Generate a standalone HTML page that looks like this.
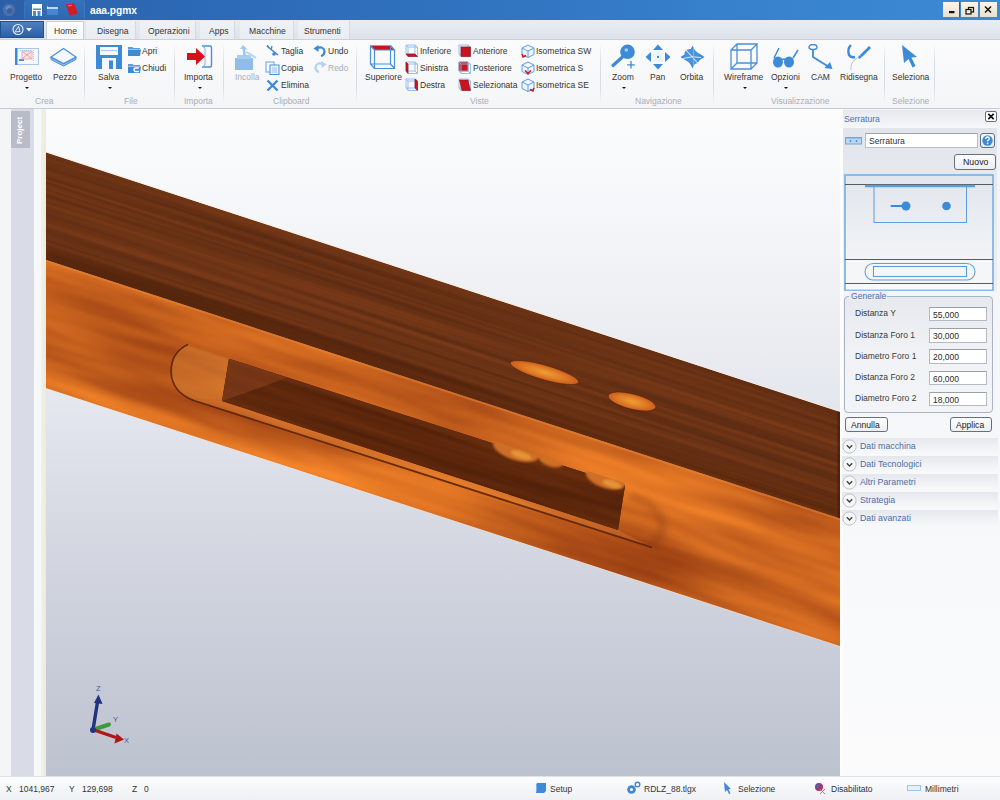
<!DOCTYPE html>
<html><head><meta charset="utf-8">
<style>
*{margin:0;padding:0;box-sizing:border-box}
html,body{width:1000px;height:800px;overflow:hidden;background:#f3f4f7;font-family:"Liberation Sans",sans-serif;color:#333}
.a{position:absolute}
.t{position:absolute;font-size:8.5px;line-height:10px;white-space:nowrap;color:#333}
.g{color:#a9aeb6}
.sep{position:absolute;top:45px;width:1px;height:60px;background:linear-gradient(#f6f7f9,#d9dde3 30%,#d9dde3 70%,#f6f7f9)}
.arr{position:absolute;width:0;height:0;border-left:2.5px solid transparent;border-right:2.5px solid transparent;border-top:2.5px solid #111;margin-left:1px}
</style></head><body>

<!-- TITLE BAR -->
<div class="a" style="left:0;top:0;width:1000px;height:20px;background:linear-gradient(90deg,#2b5fa8 0%,#2d66b0 9%,#2c69b6 20%,#3174c0 50%,#3882cd 75%,#3c89d4 100%)"></div>
<div class="a" id="titletext" style="left:90px;top:3.5px;font-size:10.2px;line-height:14px;color:#fff;font-weight:bold">aaa.pgmx</div>


<!-- title icons -->
<svg class="a" style="left:0;top:0" width="90" height="20" viewBox="0 0 90 20">
 <defs><linearGradient id="qa" x1="0" y1="0" x2="0" y2="1"><stop offset="0" stop-color="#3a7cc8"/><stop offset="1" stop-color="#2f6ab4"/></linearGradient></defs>
 <rect x="25" y="0" width="59" height="19.5" fill="url(#qa)" opacity="0.6"/>
 <circle cx="9" cy="10" r="6.2" fill="#4a6fab"/>
 <path d="M5 8 Q9 3 13 8 Q10 6 7 10 Z" fill="#6d8cc0"/>
 <circle cx="9.5" cy="11" r="2.5" fill="#3c5f9c"/>
 <path d="M24.5 1 V19" stroke="#5c8fd0" stroke-width="0.8" opacity="0.5"/>
 <rect x="32" y="4" width="10" height="12" fill="#fff"/>
 <rect x="33" y="8.5" width="8" height="1.5" fill="#4a8ad0"/>
 <rect x="33" y="11" width="3" height="5" fill="#4a8ad0"/>
 <rect x="37.5" y="11" width="3" height="5" fill="#4a8ad0"/>
 <rect x="47" y="7" width="11" height="8" fill="#4d96dc" opacity="0.7"/>
 <path d="M47.5 8 H58" stroke="#e6f2fc" stroke-width="1.5"/>
 <path d="M47.5 6.5 V9" stroke="#e6f2fc" stroke-width="1.2"/>
 <path d="M66 4.5 L74 3 L78 13.5 L69.5 15.5 Z" fill="#d41c26"/>
 <path d="M68 6 L72 5.2" stroke="#f0a0a0" stroke-width="0.7"/>
 <path d="M84.5 1 V19" stroke="#5c8fd0" stroke-width="0.8" opacity="0.5"/>
</svg>
<div class="a" style="left:943px;top:2px;width:17px;height:15px;background:linear-gradient(#fbf6ea,#e9e1cf);border-right:1px solid #2a5d9f"></div>
<div class="a" style="left:961px;top:2px;width:17px;height:15px;background:linear-gradient(#fbf6ea,#e9e1cf)"></div>
<div class="a" style="left:980px;top:2px;width:17px;height:15px;background:linear-gradient(#fbf6ea,#e9e1cf)"></div>
<svg class="a" style="left:943px;top:2px" width="54" height="15" viewBox="0 0 54 15">
 <rect x="6" y="9" width="5.5" height="2.2" fill="#111"/>
 <rect x="25.5" y="5.5" width="5" height="4.5" fill="none" stroke="#111" stroke-width="1.2"/>
 <rect x="23" y="7.5" width="5" height="4.5" fill="#f4eedf" stroke="#111" stroke-width="1.2"/>
 <path d="M42 4.5 L48 10.5 M48 4.5 L42 10.5" stroke="#111" stroke-width="1.5"/>
</svg>


<!-- TAB ROW -->
<div class="a" style="left:0;top:20px;width:1000px;height:19px;background:linear-gradient(#e9edf3,#dde2ea)"></div>
<div class="a" style="left:0;top:21px;width:44px;height:17px;background:linear-gradient(#4f7fbf,#2d5fa6);border:1px solid #24508f"></div>
<div class="a" style="left:85px;top:21px;width:51px;height:18px;background:linear-gradient(#eef1f5,#e9ecf1);border-left:1px solid #e4e8ed;border-right:1px solid #d5dae2"></div>
<div class="a" style="left:139px;top:21px;width:57px;height:18px;background:linear-gradient(#eef1f5,#e9ecf1);border-left:1px solid #e4e8ed;border-right:1px solid #d5dae2"></div>
<div class="a" style="left:199px;top:21px;width:36px;height:18px;background:linear-gradient(#eef1f5,#e9ecf1);border-left:1px solid #e4e8ed;border-right:1px solid #d5dae2"></div>
<div class="a" style="left:239px;top:21px;width:55px;height:18px;background:linear-gradient(#eef1f5,#e9ecf1);border-left:1px solid #e4e8ed;border-right:1px solid #d5dae2"></div>
<div class="a" style="left:297px;top:21px;width:53px;height:18px;background:linear-gradient(#eef1f5,#e9ecf1);border-left:1px solid #e4e8ed;border-right:1px solid #d5dae2"></div>
<div class="a" style="left:46px;top:21px;width:38px;height:19px;background:linear-gradient(#fdfdfe,#f6f7f9);border:1px solid #c9d0da;border-bottom:none"></div>
<svg class="a" style="left:4px;top:22px" width="38" height="15" viewBox="0 0 38 15">
 <circle cx="14" cy="7.5" r="5" fill="none" stroke="#e8f0fa" stroke-width="1.1"/>
 <path d="M11 10 L14.5 4.5 L16 9.5 Z" fill="none" stroke="#e8f0fa" stroke-width="1"/>
 <path d="M22 6 L28 6 L25 9.5 Z" fill="#e8f0fa"/>
</svg>
<div class="t" style="left:54px;top:26px;font-size:8.6px;color:#333">Home</div>
<div class="t" style="left:97px;top:26px;font-size:8.6px">Disegna</div>
<div class="t" style="left:148px;top:26px;font-size:8.6px">Operazioni</div>
<div class="t" style="left:209px;top:26px;font-size:8.6px">Apps</div>
<div class="t" style="left:249px;top:26px;font-size:8.6px">Macchine</div>
<div class="t" style="left:304px;top:26px;font-size:8.6px">Strumenti</div>

<!-- RIBBON -->
<div class="a" style="left:0;top:39px;width:1000px;height:70px;background:linear-gradient(#fbfbfc,#f4f5f7);border-top:1px solid #c9d0da;border-bottom:1px solid #c6ccd6"></div>


<!-- RIBBON CONTENT -->
<div class="sep" style="left:84px"></div>
<div class="sep" style="left:174px"></div>
<div class="sep" style="left:223px"></div>
<div class="sep" style="left:356px"></div>
<div class="sep" style="left:600px"></div>
<div class="sep" style="left:713px"></div>
<div class="sep" style="left:884px"></div>
<div class="sep" style="left:934px"></div>

<!-- Crea -->
<svg class="a" style="left:14px;top:47px" width="26" height="19" viewBox="0 0 26 19">
 <rect x="1.5" y="1.5" width="23" height="16" fill="#f4f7fb" stroke="#a9c6e6" stroke-width="1"/>
 <rect x="1" y="1" width="2.5" height="17" fill="#3d8ad4"/>
 <rect x="5" y="12" width="5" height="2" fill="#4a90d8"/>
 <rect x="8" y="4" width="10" height="8" fill="#f7e3e6" stroke="#e0a0a8" stroke-width="0.8"/>
 <path d="M9 5 L17 11 M17 5 L9 11" stroke="#e89098" stroke-width="0.8"/>
 <path d="M19.5 3 V14 M6 3.5 H18" stroke="#9bb8d8" stroke-width="0.7" stroke-dasharray="1 1"/>
</svg>
<div class="t" style="left:10px;top:72px">Progetto</div>
<div class="arr" style="left:24px;top:87px"></div>
<svg class="a" style="left:50px;top:47px" width="27" height="20" viewBox="0 0 27 20">
 <path d="M1 10 V12.5 L13.5 19 L26 12.5 V10 L13.5 16.5 Z" fill="#8cbbe8" stroke="#4a90d8" stroke-width="1"/>
 <path d="M1 10 L13.5 1.5 L26 10 L13.5 16.5 Z" fill="#f3f8fd" stroke="#4a90d8" stroke-width="1.3"/>
</svg>
<div class="t" style="left:53px;top:72px">Pezzo</div>
<div class="t g" style="left:35px;top:96px">Crea</div>

<!-- File -->
<svg class="a" style="left:96px;top:45px" width="26" height="24" viewBox="0 0 26 24">
 <path d="M0 0 H26 V24 H0 Z" fill="#3d8ad6"/>
 <rect x="4" y="2" width="18" height="8" fill="#f4f8fc"/>
 <rect x="5" y="5" width="16" height="1" fill="#a9c9ea"/>
 <rect x="6" y="13" width="14" height="11" fill="#f4f8fc"/>
 <rect x="13" y="15.5" width="4" height="8.5" fill="#3d8ad6"/>
</svg>
<div class="t" style="left:98px;top:72px">Salva</div>
<div class="arr" style="left:107px;top:87px"></div>
<svg class="a" style="left:128px;top:46px" width="13" height="10" viewBox="0 0 13 10">
 <path d="M0 1 H4.5 L5.5 2 H12 V3 H0 Z" fill="#5a9ee0"/>
 <path d="M0 3.5 H13 L12 10 H0 Z" fill="#3d8ad6"/>
</svg>
<div class="t" style="left:142px;top:46px">Apri</div>
<svg class="a" style="left:128px;top:63px" width="13" height="10" viewBox="0 0 13 10">
 <path d="M0 1 H4.5 L5.5 2 H12 V3 H0 Z" fill="#5a9ee0"/>
 <path d="M0 3.5 H13 L12 10 H0 Z" fill="#3d8ad6"/>
 <path d="M11 5 H7.5 Q6 5 6 6.7 Q6 8.4 7.5 8.4 H11" stroke="#fff" stroke-width="1.5" fill="none"/>
</svg>
<div class="t" style="left:142px;top:63px">Chiudi</div>
<div class="t g" style="left:124px;top:96px">File</div>

<!-- Importa -->
<svg class="a" style="left:186px;top:44px" width="27" height="25" viewBox="0 0 27 25">
 <path d="M16 2 H24 Q25.5 2 25.5 3.5 V21.5 Q25.5 23 24 23 H16" fill="none" stroke="#4a90d8" stroke-width="1.4"/>
 <path d="M16 2 L19 4 V21 L16 23" fill="none" stroke="#7fb2e6" stroke-width="1"/>
 <path d="M1 9 H10 V4 L19 12.5 L10 21 V16 H1 Z" fill="#d4101c"/>
</svg>
<div class="t" style="left:184px;top:72px">Importa</div>
<div class="arr" style="left:197px;top:87px"></div>
<div class="t g" style="left:184px;top:96px">Importa</div>

<!-- Clipboard -->
<svg class="a" style="left:234px;top:44px" width="25" height="27" viewBox="0 0 25 27">
 <rect x="1" y="14" width="18" height="12" fill="#8fbde8"/>
 <rect x="3" y="11" width="14" height="4" fill="#a8cdee"/>
 <path d="M9 1 L6 5 L8.5 5 L9.5 12 L12 12 L11 5 L14 6 Z" fill="#9cc6ec"/>
 <path d="M12 8 Q17 10 22 14" stroke="#b8d6f2" stroke-width="2" fill="none"/>
</svg>
<div class="t g" style="left:235px;top:72px">Incolla</div>
<svg class="a" style="left:266px;top:45px" width="14" height="11" viewBox="0 0 14 11">
 <path d="M1 1 L7 6 L12 10" stroke="#3d8ad6" stroke-width="1.6" fill="none"/>
 <path d="M6 1 L5 5 M3 3 Q1 1 2 0" stroke="#3d8ad6" stroke-width="1.3" fill="none"/>
 <circle cx="8" cy="9" r="1.8" fill="#3d8ad6"/>
</svg>
<div class="t" style="left:281px;top:46px">Taglia</div>
<svg class="a" style="left:265px;top:61px" width="15" height="14" viewBox="0 0 15 14">
 <rect x="1" y="1" width="8" height="10" fill="#f4f8fc" stroke="#6aa6e0" stroke-width="1"/>
 <rect x="5" y="4" width="9" height="9.5" fill="#e8f1fa" stroke="#4a90d8" stroke-width="1"/>
 <path d="M7 7 H12 M7 9 H12 M7 11 H12" stroke="#8ab8e6" stroke-width="0.8"/>
</svg>
<div class="t" style="left:281px;top:63px">Copia</div>
<svg class="a" style="left:266px;top:79px" width="13" height="13" viewBox="0 0 13 13">
 <path d="M1.5 1.5 L11.5 11.5 M11.5 1.5 L1.5 11.5" stroke="#3d8ad6" stroke-width="2.4"/>
</svg>
<div class="t" style="left:281px;top:80px">Elimina</div>
<svg class="a" style="left:313px;top:45px" width="14" height="12" viewBox="0 0 14 12">
 <path d="M4 3 Q11 1 11.5 6.5 Q11.5 10 8 11" stroke="#3d8ad6" stroke-width="2.2" fill="none"/>
 <path d="M0.5 3.5 L5.5 0 L5.5 7 Z" fill="#3d8ad6"/>
</svg>
<div class="t" style="left:328px;top:46px">Undo</div>
<svg class="a" style="left:313px;top:61px" width="14" height="12" viewBox="0 0 14 12">
 <path d="M10 3 Q3 1 2.5 6.5 Q2.5 10 6 11" stroke="#b2d2f0" stroke-width="2.2" fill="none"/>
 <path d="M13.5 3.5 L8.5 0 L8.5 7 Z" fill="#b2d2f0"/>
</svg>
<div class="t g" style="left:328px;top:63px">Redo</div>
<div class="t g" style="left:273px;top:96px">Clipboard</div>

<!-- Viste -->
<svg class="a" style="left:369px;top:44px" width="28" height="26" viewBox="0 0 28 26">
 <path d="M1.5 1.5 H21.5 L25.5 6 H5.5 Z" fill="#c8141e"/>
 <path d="M1.5 1.5 V20 H21.5 V1.5 M5.5 6 H25.5 V24.5 H5.5 Z M1.5 20 L5.5 24.5 M21.5 20 L25.5 24.5 M1.5 1.5 L5.5 6 M21.5 1.5 L25.5 6" fill="none" stroke="#4a90d8" stroke-width="1.2"/>
</svg>
<div class="t" style="left:365px;top:72px">Superiore</div>
<svg class="a" style="left:405px;top:44px" width="14" height="14" viewBox="0 0 14 14"><path d="M1 1 H10 V10 H1 Z M3 3 H12.5 V12.5 H3 Z M1 1 L3 3 M10 1 L12.5 3 M1 10 L3 12.5 M10 10 L12.5 12.5" fill="none" stroke="#8ab8e6" stroke-width="0.9"/><path d="M1 10 H10 L12.5 12.5 H3 Z" fill="#c8141e" stroke="#a80e16" stroke-width="0.6"/></svg><div class="t" style="left:420px;top:46px">Inferiore</div>
<svg class="a" style="left:405px;top:61px" width="14" height="14" viewBox="0 0 14 14"><path d="M1 1 H10 V10 H1 Z M3 3 H12.5 V12.5 H3 Z M1 1 L3 3 M10 1 L12.5 3 M1 10 L3 12.5 M10 10 L12.5 12.5" fill="none" stroke="#8ab8e6" stroke-width="0.9"/><path d="M1 1 L3 3 V12.5 L1 10 Z" fill="#c8141e" stroke="#a80e16" stroke-width="0.6"/></svg><div class="t" style="left:420px;top:63px">Sinistra</div>
<svg class="a" style="left:405px;top:78px" width="14" height="14" viewBox="0 0 14 14"><path d="M1 1 H10 V10 H1 Z M3 3 H12.5 V12.5 H3 Z M1 1 L3 3 M10 1 L12.5 3 M1 10 L3 12.5 M10 10 L12.5 12.5" fill="none" stroke="#8ab8e6" stroke-width="0.9"/><path d="M10 1 L12.5 3 V12.5 L10 10 Z" fill="#c8141e" stroke="#a80e16" stroke-width="0.6"/></svg><div class="t" style="left:420px;top:80px">Destra</div>
<svg class="a" style="left:458px;top:44px" width="14" height="14" viewBox="0 0 14 14"><path d="M1 1 H10 V10 H1 Z M3 3 H12.5 V12.5 H3 Z M1 1 L3 3 M10 1 L12.5 3 M1 10 L3 12.5 M10 10 L12.5 12.5" fill="none" stroke="#8ab8e6" stroke-width="0.9"/><path d="M3 3 H12.5 V12.5 H3 Z" fill="#c8141e" stroke="#a80e16" stroke-width="0.6"/></svg><div class="t" style="left:473px;top:46px">Anteriore</div>
<svg class="a" style="left:458px;top:61px" width="14" height="14" viewBox="0 0 14 14"><path d="M1 1 H10 V10 H1 Z" fill="#c8141e" stroke="#a80e16" stroke-width="0.6"/><path d="M1 1 H10 V10 H1 Z M3 3 H12.5 V12.5 H3 Z M1 1 L3 3 M10 1 L12.5 3 M1 10 L3 12.5 M10 10 L12.5 12.5" fill="none" stroke="#8ab8e6" stroke-width="0.9"/></svg><div class="t" style="left:473px;top:63px">Posteriore</div>
<svg class="a" style="left:458px;top:78px" width="14" height="14" viewBox="0 0 14 14"><path d="M1 1 H10 V10 H1 Z M3 3 H12.5 V12.5 H3 Z M1 1 L3 3 M10 1 L12.5 3 M1 10 L3 12.5 M10 10 L12.5 12.5" fill="none" stroke="#8ab8e6" stroke-width="0.9"/><path d="M1.5 2 H10 L12.5 12.5 H4 Z" fill="#c8141e" stroke="#a80e16" stroke-width="0.6"/></svg><div class="t" style="left:473px;top:80px">Selezionata</div>
<svg class="a" style="left:521px;top:44px" width="14" height="14" viewBox="0 0 14 14">
 <path d="M7 1 L13 4 V10.5 L7 13.5 L1 10.5 V4 Z M1 4 L7 7 L13 4 M7 7 V13.5" fill="#eef5fc" stroke="#5a9ee0" stroke-width="1"/>
 <path d="M1 10 L2 13 L5 11.5" fill="none" stroke="#c8141e" stroke-width="1.4"/>
</svg><div class="t" style="left:536px;top:46px">Isometrica SW</div>
<svg class="a" style="left:521px;top:61px" width="14" height="14" viewBox="0 0 14 14">
 <path d="M7 1 L13 4 V10.5 L7 13.5 L1 10.5 V4 Z M1 4 L7 7 L13 4 M7 7 V13.5" fill="#eef5fc" stroke="#5a9ee0" stroke-width="1"/>
 <path d="M4 9.5 L7 12.5 L10 9.5" fill="none" stroke="#c8141e" stroke-width="1.4"/>
</svg><div class="t" style="left:536px;top:63px">Isometrica S</div>
<svg class="a" style="left:521px;top:78px" width="14" height="14" viewBox="0 0 14 14">
 <path d="M7 1 L13 4 V10.5 L7 13.5 L1 10.5 V4 Z M1 4 L7 7 L13 4 M7 7 V13.5" fill="#eef5fc" stroke="#5a9ee0" stroke-width="1"/>
 <path d="M13 10 L12 13 L9 11.5" fill="none" stroke="#c8141e" stroke-width="1.4"/>
</svg><div class="t" style="left:536px;top:80px">Isometrica SE</div>
<div class="t g" style="left:470px;top:96px">Viste</div>

<!-- Navigazione -->
<svg class="a" style="left:610px;top:44px" width="27" height="26" viewBox="0 0 27 26">
 <circle cx="17.5" cy="7.8" r="7.3" fill="#3d8ad6"/>
 <circle cx="16.3" cy="6" r="1.8" fill="#a9d0f2"/>
 <path d="M12.5 13 L3 21.5" stroke="#3d8ad6" stroke-width="3.2" stroke-linecap="round"/>
 <path d="M21 17 V24.5 M17.2 20.8 H24.8" stroke="#3d8ad6" stroke-width="1.3"/>
</svg>
<div class="t" style="left:612px;top:72px">Zoom</div>
<div class="arr" style="left:621px;top:87px"></div>
<svg class="a" style="left:645px;top:44px" width="26" height="26" viewBox="0 0 26 26">
 <path d="M13 0.5 L18 6 H8 Z M13 25.5 L18 20 H8 Z M0.5 13 L6 8 V18 Z M25.5 13 L20 8 V18 Z" fill="#3d8ad6"/>
 <rect x="12" y="12" width="2" height="2" fill="#3d8ad6"/>
 <path d="M8 8 H18 V18 H8 Z" fill="#e6f0fa" opacity="0.6"/>
 <rect x="12" y="12" width="2" height="2" fill="#3d8ad6"/>
</svg>
<div class="t" style="left:650px;top:72px">Pan</div>
<svg class="a" style="left:679px;top:44px" width="27" height="26" viewBox="0 0 27 26">
 <path d="M13.5 1.5 Q15.5 7 19 9 Q23 11 25.5 13 Q22 15 19 17 Q15.5 19 13.5 24.5 Q11.5 19 8 17 Q4 15 1.5 13 Q5 11 8 9 Q11.5 7 13.5 1.5 Z" fill="#3d8ad6"/>
 <ellipse cx="13" cy="12.5" rx="8.5" ry="6.5" fill="#4a92da" transform="rotate(40 13 12.5)"/>
 <path d="M6 5 L20 20.5" stroke="#d8eafa" stroke-width="1.1"/>
 <path d="M4 14.5 Q13 11.5 22 13.5" stroke="#d8eafa" stroke-width="1" fill="none"/>
 <path d="M14.5 3 V22" stroke="#8cc0ee" stroke-width="0.8"/>
</svg>
<div class="t" style="left:680px;top:72px">Orbita</div>
<div class="t g" style="left:635px;top:96px">Navigazione</div>

<!-- Visualizzazione -->
<svg class="a" style="left:730px;top:43px" width="28" height="27" viewBox="0 0 28 27">
 <path d="M1 7 H21 V26 H1 Z M1 7 L7 1 H27 L21 7 M27 1 V20 L21 26 M7 1 V20 H27 M1 26 L7 20" fill="none" stroke="#4a90d8" stroke-width="1.3"/>
</svg>
<div class="t" style="left:724px;top:72px">Wireframe</div>
<div class="arr" style="left:742px;top:87px"></div>
<svg class="a" style="left:771px;top:45px" width="28" height="24" viewBox="0 0 28 24">
 <ellipse cx="7" cy="17" rx="5" ry="5.5" fill="#3d8ad6"/>
 <ellipse cx="18" cy="17" rx="5" ry="5.5" fill="#3d8ad6"/>
 <path d="M11.5 15 Q12.5 13 14 15" stroke="#3d8ad6" stroke-width="1.5" fill="none"/>
 <path d="M3 13 L8 3 M22 13 L27 5" stroke="#3d8ad6" stroke-width="1.5" fill="none"/>
</svg>
<div class="t" style="left:771px;top:72px">Opzioni</div>
<div class="arr" style="left:783px;top:87px"></div>
<svg class="a" style="left:808px;top:44px" width="26" height="26" viewBox="0 0 26 26">
 <ellipse cx="5" cy="3" rx="4" ry="2.5" fill="none" stroke="#3d8ad6" stroke-width="1.4"/>
 <path d="M5 5.5 V13 L21 23" stroke="#3d8ad6" stroke-width="1.8" fill="none"/>
 <path d="M24.5 25 L16.5 24 L22 18 Z" fill="#3d8ad6"/>
</svg>
<div class="t" style="left:811px;top:72px">CAM</div>
<svg class="a" style="left:845px;top:43px" width="27" height="28" viewBox="0 0 27 28">
 <path d="M15 12 L24 3 L26 5 L17 14 Z" fill="#3d8ad6"/>
 <path d="M17 7 L22 5" stroke="#e6f0fa" stroke-width="0.8"/>
 <path d="M13 14 L15 12 L17 14 L14 16 Z" fill="#3d8ad6"/>
 <path d="M6 2 Q2 6 4 12 Q6 15 10 14" stroke="#3d8ad6" stroke-width="2.4" fill="none"/>
 <path d="M12 15 Q5 19 6 27" stroke="#a9c9ea" stroke-width="1" fill="none"/>
</svg>
<div class="t" style="left:840px;top:72px">Ridisegna</div>
<div class="t g" style="left:771px;top:96px">Visualizzazione</div>

<!-- Selezione -->
<svg class="a" style="left:901px;top:44px" width="18" height="26" viewBox="0 0 18 26">
 <path d="M1 1 L16 13 L10.5 13.5 L14.5 22 L11.5 23.5 L7.5 15 L3 19 Z" fill="#3d8ad6"/>
</svg>
<div class="t" style="left:892px;top:72px">Seleziona</div>
<div class="t g" style="left:892px;top:96px">Selezione</div>

<!-- LEFT SIDEBAR -->
<div class="a" style="left:0;top:109px;width:11px;height:667px;background:#f4f5f8"></div>
<div class="a" style="left:11px;top:109px;width:23px;height:667px;background:#d9dce6"></div>
<div class="a" style="left:34px;top:109px;width:7px;height:667px;background:#f7f8fa"></div>
<div class="a" style="left:41px;top:109px;width:5px;height:667px;background:linear-gradient(90deg,#f1f1e6,#ecebdc)"></div>

<div class="a" style="left:11px;top:111px;width:19px;height:37px;background:#b8bcc8;border-radius:1px"></div>
<div class="a" style="left:14px;top:144px;font-size:8px;line-height:12px;color:#fff;font-weight:bold;transform:rotate(-90deg);transform-origin:0 0;white-space:nowrap">Project</div>

<!-- VIEWPORT -->
<div class="a" style="left:46px;top:109px;width:794px;height:667px;background:linear-gradient(#fcfcfd 0%,#f7f8fa 12%,#eff0f4 28%,#e4e7ee 44%,#d8dbe4 60%,#caceda 80%,#bdc2cf 100%)"></div>


<!-- WOOD -->
<svg class="a" style="left:46px;top:109px" width="794" height="667" viewBox="46 109 794 667">
<defs>
 <filter id="ftop" x="0" y="0" width="100%" height="100%" color-interpolation-filters="sRGB">
  <feTurbulence type="fractalNoise" baseFrequency="0.0018 0.22" numOctaves="3" seed="5"/>
  <feColorMatrix type="matrix" values="0.2 0 0 0 0.315  0.1 0 0 0 0.146  0.04 0 0 0 0.062  0 0 0 0 1"/>
 </filter>
 <filter id="ffront" x="0" y="0" width="100%" height="100%" color-interpolation-filters="sRGB">
  <feTurbulence type="fractalNoise" baseFrequency="0.004 0.032" numOctaves="3" seed="12"/>
  <feColorMatrix type="matrix" values="0.5 0 0 0 0.54  0.38 0 0 0 0.2  0.12 0 0 0 0.06  0 0 0 0 1"/>
 </filter>
 <filter id="fpocket" x="0" y="0" width="100%" height="100%" color-interpolation-filters="sRGB">
  <feTurbulence type="fractalNoise" baseFrequency="0.005 0.12" numOctaves="2" seed="11"/>
  <feColorMatrix type="matrix" values="0.18 0 0 0 0.27  0.09 0 0 0 0.105  0.04 0 0 0 0.025  0 0 0 0 1"/>
 </filter>
 <clipPath id="ctop"><polygon points="46,152.5 840,412 840,518.5 46,260"/></clipPath>
 <clipPath id="cfront"><polygon points="46,260 840,518.5 840,646 46,388"/></clipPath>
 <clipPath id="cpocket"><polygon points="229,358.7 625,485.5 618,530 222,401"/></clipPath>
 <clipPath id="cpocket2"><polygon points="229,356.5 625,483 618,530 222,401"/></clipPath>
 <radialGradient id="hole" cx="0.5" cy="0.5" r="0.55">
  <stop offset="0" stop-color="#eba032"/><stop offset="0.55" stop-color="#e07a26"/><stop offset="0.9" stop-color="#c85e1c"/><stop offset="1" stop-color="#8a3a10"/>
 </radialGradient>
 <filter id="blur1" x="-50%" y="-50%" width="200%" height="200%"><feGaussianBlur stdDeviation="1.2"/></filter>
 <filter id="blur3" x="-50%" y="-50%" width="200%" height="200%"><feGaussianBlur stdDeviation="3"/></filter>
 <filter id="blur5" x="-80%" y="-80%" width="260%" height="260%"><feGaussianBlur stdDeviation="5"/></filter>
</defs>
<g clip-path="url(#ctop)">
 <rect x="0" y="0" width="1000" height="800" fill="#673012"/>
 <g transform="rotate(18 440 335)"><rect x="-60" y="100" width="1000" height="480" filter="url(#ftop)"/></g>
 <polygon points="46,246 840,504.5 840,520 46,262" fill="#3e1804" opacity="0.3" filter="url(#blur3)"/>
</g>
<g clip-path="url(#cfront)">
 <rect x="0" y="0" width="1000" height="800" fill="#c9601e"/>
 <g transform="rotate(18 440 455)"><rect x="-60" y="200" width="1000" height="520" filter="url(#ffront)"/></g>
 <polygon points="46,260 840,518.5 840,520.5 46,262" fill="#e8883a" opacity="0.5"/>
</g>
<path d="M46,152 L840,411.5" stroke="#fbe9d6" stroke-width="1" opacity="0.8"/>
<polygon points="837.5,411 840,412 840,518.5 837.5,517.7" fill="#3a1606" opacity="0.5"/>
<path d="M46,388.5 L840,646.5" stroke="#f7dcc4" stroke-width="0.8" opacity="0.6"/>
<!-- capsule floor lighter -->
<path d="M186,345 L232,360 L224,401 L192,400 Q170,390 171,372 Q173,350 186,345 Z" fill="#f0a04a" opacity="0.3" filter="url(#blur1)"/>
<path d="M630,496 Q664,506 662,531 Q659,543 648,545" stroke="#7a300c" stroke-width="8" fill="none" opacity="0.3" filter="url(#blur3)"/>
<polygon points="222,401 618,530 645,544 192,400" fill="#ec9040" opacity="0.3"/>
<path d="M192,400 L652,547.5" stroke="#5a2406" stroke-width="1.8" opacity="0.9" fill="none"/>
<path d="M188,344.5 Q171,352 171,372 Q172,392 193,400.3" stroke="#5a2406" stroke-width="1.7" fill="none" opacity="0.9"/>
<!-- pocket -->
<g clip-path="url(#cpocket)">
 <rect x="0" y="0" width="1000" height="800" fill="#582609"/>
 <g transform="rotate(18 420 440)"><rect x="150" y="300" width="560" height="280" filter="url(#fpocket)"/></g>
 <polygon points="229,358.7 288,377.6 222,401" fill="#8a4420" opacity="0.55"/>
 <polygon points="229,358.7 625,485.5 624,492 229,364" fill="#7a3a18" opacity="0.3" filter="url(#blur1)"/>
</g>
<g clip-path="url(#cpocket2)">
 <ellipse cx="516" cy="450" rx="24" ry="10" fill="#cf6e26" filter="url(#blur1)" transform="rotate(18 516 450)"/>
 <ellipse cx="551" cy="460" rx="13" ry="6.5" fill="#cf6e26" filter="url(#blur1)" transform="rotate(18 551 460)"/>
 <ellipse cx="606" cy="478" rx="21" ry="10" fill="#cf6e26" filter="url(#blur1)" transform="rotate(18 606 478)"/>
 <ellipse cx="521" cy="455" rx="11" ry="3.5" fill="#eca640" opacity="0.7" filter="url(#blur1)" transform="rotate(18 521 455)"/>
 <ellipse cx="612" cy="484" rx="10" ry="3.5" fill="#eca640" opacity="0.7" filter="url(#blur1)" transform="rotate(18 612 484)"/>
</g>
<!-- holes on top face -->
<g>
 <ellipse cx="544.5" cy="372.5" rx="35.5" ry="7.2" transform="rotate(16 544.5 372.5)" fill="url(#hole)" stroke="#4a1c04" stroke-width="0.8" stroke-opacity="0.6"/>
 <ellipse cx="632" cy="401.5" rx="24.5" ry="7.6" transform="rotate(14 632 401.5)" fill="url(#hole)" stroke="#4a1c04" stroke-width="0.8" stroke-opacity="0.6"/>
</g>
</svg>


<!-- AXIS TRIAD -->
<svg class="a" style="left:80px;top:680px" width="60" height="70" viewBox="80 680 60 70">
 <path d="M93 730 L97.5 702" stroke="#1f3380" stroke-width="3.4"/>
 <path d="M98.5 694.5 L102.5 704 L94 703 Z" fill="#1f3380"/>
 <path d="M94 729.5 L109 724.5" stroke="#3c9a3c" stroke-width="4" stroke-linecap="round"/>
 <path d="M94 730 L116 737.5" stroke="#b01818" stroke-width="3.4"/>
 <path d="M124 739.5 L114.5 743.5 L116.5 733.5 Z" fill="#b01818"/>
 <circle cx="93" cy="730" r="3" fill="#1f3380"/>
 <text x="96" y="691" font-family="Liberation Sans" font-size="7.5" fill="#3a5aa0">Z</text>
 <text x="113" y="722" font-family="Liberation Sans" font-size="7.5" fill="#3a5aa0">Y</text>
 <text x="124" y="743" font-family="Liberation Sans" font-size="7.5" fill="#3a5aa0">X</text>
</svg>

<!-- RIGHT PANEL -->
<div class="a" style="left:840px;top:109px;width:160px;height:667px;background:linear-gradient(#f1f3f6,#f7f8fa 60%,#fbfbfc)"></div>
<div class="a" style="left:840px;top:109px;width:3px;height:667px;background:#fdfdfe"></div>
<div class="a" style="left:843px;top:110px;width:154px;height:18px;background:linear-gradient(#e6e9ee,#f6f7f9)"></div>
<div class="t" style="left:844px;top:114px;color:#4a72ad;font-size:8.6px">Serratura</div>
<div class="a" style="left:985px;top:111px;width:12px;height:11px;background:#fff;border:1px solid #66707c;border-radius:2px"></div>
<svg class="a" style="left:985px;top:111px" width="12" height="11" viewBox="0 0 12 11"><path d="M3.3 2.8 L8.7 8.2 M8.7 2.8 L3.3 8.2" stroke="#111" stroke-width="1.7"/></svg>
<div class="a" style="left:843px;top:128px;width:154px;height:163px;background:linear-gradient(#e2e6ec,#e6e9ee 40%,#eceef2)"></div>
<svg class="a" style="left:845px;top:136px" width="17" height="9" viewBox="0 0 17 9">
 <rect x="0.5" y="2" width="16" height="6" fill="#bcd8f2" stroke="#6ea6dc" stroke-width="1"/>
 <path d="M0 1.5 H17" stroke="#6ea6dc" stroke-width="1"/>
 <circle cx="5.5" cy="5" r="0.9" fill="#3d8ad6"/><circle cx="11.5" cy="5" r="0.9" fill="#3d8ad6"/>
</svg>
<div class="a" style="left:865px;top:133px;width:113px;height:15px;background:#fff;border:1px solid #b9bec7;border-top-color:#9ea5b0"></div>
<div class="t" style="left:869px;top:136px;color:#333;font-size:8.6px">Serratura</div>
<div class="a" style="left:980px;top:133px;width:15px;height:15px;background:linear-gradient(#f8fafc,#e4e9ef);border:1px solid #66707c;border-radius:3px"></div>
<svg class="a" style="left:980px;top:133px" width="15" height="15" viewBox="0 0 15 15"><circle cx="7.5" cy="7.5" r="5.2" fill="#3b8bd6"/><path d="M5.8 6 Q5.8 4 7.5 4 Q9.3 4 9.3 5.7 Q9.3 6.7 7.6 7.6 V8.6" stroke="#fff" stroke-width="1.3" fill="none"/><circle cx="7.6" cy="10.4" r="0.8" fill="#fff"/></svg>
<div class="a" style="left:954px;top:154px;width:42px;height:16px;background:linear-gradient(#fdfdfe,#eceff3);border:1px solid #66707c;border-radius:3px"></div>
<div class="t" style="left:963px;top:157px;color:#222;font-size:8.8px">Nuovo</div>

<!-- preview box -->
<svg class="a" style="left:844px;top:174px" width="150" height="117" viewBox="844 174 150 117">
 <defs><linearGradient id="pvbg" x1="0" y1="0" x2="0" y2="1"><stop offset="0" stop-color="#e1e6ed"/><stop offset="0.7" stop-color="#f1f3f6"/><stop offset="1" stop-color="#f6f7f9"/></linearGradient></defs>
 <rect x="845" y="175" width="148" height="115" fill="url(#pvbg)" stroke="#78aee0" stroke-width="1.6"/>
 <path d="M845 184.5 H993" stroke="#5a5a5a" stroke-width="1.1"/>
 <path d="M865 186 H975" stroke="#5a9ee0" stroke-width="2.4"/>
 <rect x="874" y="186" width="92.5" height="36.5" fill="none" stroke="#5a9ee0" stroke-width="1"/>
 <path d="M891.5 206 H904" stroke="#3d8ad6" stroke-width="2.2" stroke-linecap="round"/>
 <circle cx="906" cy="206" r="4.5" fill="#3d8ad6"/>
 <circle cx="946.5" cy="206" r="4.3" fill="#3d8ad6"/>
 <path d="M845 259.5 H993" stroke="#5a5a5a" stroke-width="1.1"/>
 <rect x="846" y="260" width="146" height="23" fill="#f5f6f8"/>
 <rect x="865" y="263.5" width="110" height="16.5" rx="8.2" fill="none" stroke="#5a9ee0" stroke-width="1.1"/>
 <rect x="873.5" y="266.5" width="93" height="10" fill="none" stroke="#5a9ee0" stroke-width="1.1"/>
 <path d="M845 283.5 H993" stroke="#5a5a5a" stroke-width="1.1"/>
 <rect x="846" y="284" width="146" height="5.5" fill="#f8f9fb"/>
</svg>

<!-- Generale group -->
<div class="a" style="left:844px;top:296px;width:149px;height:117px;border:1px solid #a9b3c1;border-radius:4px;background:linear-gradient(#e6e9ee,#f0f2f5 50%,#f3f4f7)"></div>
<div class="a" style="left:849px;top:292px;width:38px;height:8px;background:#eaedf1"></div>
<div class="t" style="left:851px;top:291px;color:#4a72ad;font-size:8.6px">Generale</div>
<div class="t" style="left:855px;top:308.0px;color:#3a3a3a">Distanza Y</div>
<div class="a" style="left:929px;top:306.5px;width:58px;height:14.5px;background:#fff;border:1px solid #b5bbc4;border-top-color:#98a0ab"></div>
<div class="t" style="left:933px;top:309.5px;color:#2a2a2a">55,000</div>
<div class="t" style="left:855px;top:329.5px;color:#3a3a3a">Distanza Foro 1</div>
<div class="a" style="left:929px;top:328.0px;width:58px;height:14.5px;background:#fff;border:1px solid #b5bbc4;border-top-color:#98a0ab"></div>
<div class="t" style="left:933px;top:331.0px;color:#2a2a2a">30,000</div>
<div class="t" style="left:855px;top:350.5px;color:#3a3a3a">Diametro Foro 1</div>
<div class="a" style="left:929px;top:349.0px;width:58px;height:14.5px;background:#fff;border:1px solid #b5bbc4;border-top-color:#98a0ab"></div>
<div class="t" style="left:933px;top:352.0px;color:#2a2a2a">20,000</div>
<div class="t" style="left:855px;top:372.0px;color:#3a3a3a">Distanza Foro 2</div>
<div class="a" style="left:929px;top:370.5px;width:58px;height:14.5px;background:#fff;border:1px solid #b5bbc4;border-top-color:#98a0ab"></div>
<div class="t" style="left:933px;top:373.5px;color:#2a2a2a">60,000</div>
<div class="t" style="left:855px;top:393.0px;color:#3a3a3a">Diametro Foro 2</div>
<div class="a" style="left:929px;top:391.5px;width:58px;height:14.5px;background:#fff;border:1px solid #b5bbc4;border-top-color:#98a0ab"></div>
<div class="t" style="left:933px;top:394.5px;color:#2a2a2a">18,000</div>

<div class="a" style="left:845px;top:417px;width:43px;height:15px;background:linear-gradient(#fdfdfe,#eceff3);border:1px solid #66707c;border-radius:3px"></div>
<div class="t" style="left:851px;top:419.5px;color:#222;font-size:8.6px">Annulla</div>
<div class="a" style="left:950px;top:417px;width:42px;height:15px;background:linear-gradient(#fdfdfe,#eceff3);border:1px solid #66707c;border-radius:3px"></div>
<div class="t" style="left:956px;top:419.5px;color:#222;font-size:8.6px">Applica</div>
<div class="a" style="left:842px;top:438px;width:156px;height:17px;background:linear-gradient(#e4e7ec,#eff1f4 50%,#f8f9fa)"></div>
<svg class="a" style="left:842px;top:439px" width="15" height="15" viewBox="0 0 15 15"><circle cx="7.5" cy="7.5" r="6.6" fill="#f6f7f9" stroke="#b8bcc4" stroke-width="0.9"/><path d="M4.8 6.3 L7.5 9 L10.2 6.3" stroke="#444" stroke-width="1.5" fill="none"/></svg>
<div class="t" style="left:860px;top:441px;color:#4a6fa8;font-size:8.8px">Dati macchina</div>
<div class="a" style="left:842px;top:456px;width:156px;height:17px;background:linear-gradient(#e4e7ec,#eff1f4 50%,#f8f9fa)"></div>
<svg class="a" style="left:842px;top:457px" width="15" height="15" viewBox="0 0 15 15"><circle cx="7.5" cy="7.5" r="6.6" fill="#f6f7f9" stroke="#b8bcc4" stroke-width="0.9"/><path d="M4.8 6.3 L7.5 9 L10.2 6.3" stroke="#444" stroke-width="1.5" fill="none"/></svg>
<div class="t" style="left:860px;top:459px;color:#4a6fa8;font-size:8.8px">Dati Tecnologici</div>
<div class="a" style="left:842px;top:474px;width:156px;height:17px;background:linear-gradient(#e4e7ec,#eff1f4 50%,#f8f9fa)"></div>
<svg class="a" style="left:842px;top:475px" width="15" height="15" viewBox="0 0 15 15"><circle cx="7.5" cy="7.5" r="6.6" fill="#f6f7f9" stroke="#b8bcc4" stroke-width="0.9"/><path d="M4.8 6.3 L7.5 9 L10.2 6.3" stroke="#444" stroke-width="1.5" fill="none"/></svg>
<div class="t" style="left:860px;top:477px;color:#4a6fa8;font-size:8.8px">Altri Parametri</div>
<div class="a" style="left:842px;top:492px;width:156px;height:17px;background:linear-gradient(#e4e7ec,#eff1f4 50%,#f8f9fa)"></div>
<svg class="a" style="left:842px;top:493px" width="15" height="15" viewBox="0 0 15 15"><circle cx="7.5" cy="7.5" r="6.6" fill="#f6f7f9" stroke="#b8bcc4" stroke-width="0.9"/><path d="M4.8 6.3 L7.5 9 L10.2 6.3" stroke="#444" stroke-width="1.5" fill="none"/></svg>
<div class="t" style="left:860px;top:495px;color:#4a6fa8;font-size:8.8px">Strategia</div>
<div class="a" style="left:842px;top:510px;width:156px;height:17px;background:linear-gradient(#e4e7ec,#eff1f4 50%,#f8f9fa)"></div>
<svg class="a" style="left:842px;top:511px" width="15" height="15" viewBox="0 0 15 15"><circle cx="7.5" cy="7.5" r="6.6" fill="#f6f7f9" stroke="#b8bcc4" stroke-width="0.9"/><path d="M4.8 6.3 L7.5 9 L10.2 6.3" stroke="#444" stroke-width="1.5" fill="none"/></svg>
<div class="t" style="left:860px;top:513px;color:#4a6fa8;font-size:8.8px">Dati avanzati</div>


<!-- STATUS BAR -->
<div class="a" style="left:0;top:776px;width:1000px;height:24px;background:linear-gradient(#fdfdfe,#eef0f4);border-top:1px solid #dfe3e8"></div>


<div class="t" style="left:6px;top:784px;color:#333">X</div>
<div class="t" style="left:19px;top:784px;color:#333">1041,967</div>
<div class="t" style="left:69px;top:784px;color:#333">Y</div>
<div class="t" style="left:82px;top:784px;color:#333">129,698</div>
<div class="t" style="left:132px;top:784px;color:#333">Z</div>
<div class="t" style="left:144px;top:784px;color:#333">0</div>
<svg class="a" style="left:535px;top:782px" width="12" height="12" viewBox="0 0 12 12"><path d="M2 1 H11 V9 L9 11 H1 V3 Z" fill="#3d8ad6"/><path d="M1 3 L2 1 V9 L1 11" fill="#7ab4e8"/></svg>
<div class="t" style="left:550px;top:784px;color:#333">Setup</div>
<svg class="a" style="left:626px;top:781px" width="15" height="14" viewBox="0 0 15 14"><circle cx="5.5" cy="8.5" r="4.3" fill="#3d8ad6"/><circle cx="5.5" cy="8.5" r="1.5" fill="#fff"/><circle cx="11.5" cy="3.5" r="2.3" fill="none" stroke="#3d8ad6" stroke-width="1.4"/></svg>
<div class="t" style="left:644px;top:784px;color:#333">RDLZ_88.tlgx</div>
<svg class="a" style="left:723px;top:781px" width="10" height="14" viewBox="0 0 10 14"><path d="M1 1 L8 8 L5.5 8.2 L7.5 12.5 L6 13 L4 9 L2 11 Z" fill="#3d8ad6"/></svg>
<div class="t" style="left:738px;top:784px;color:#333">Selezione</div>
<svg class="a" style="left:814px;top:780px" width="13" height="15" viewBox="0 0 13 15"><circle cx="5" cy="7" r="4" fill="#b0306a"/><circle cx="4" cy="6" r="2" fill="#3d6ab0"/><path d="M6 9 L11 14 M11 9 L6 14" stroke="#e07080" stroke-width="1"/></svg>
<div class="t" style="left:831px;top:784px;color:#333">Disabilitato</div>
<svg class="a" style="left:907px;top:785px" width="14" height="6" viewBox="0 0 14 6"><rect x="0.5" y="0.5" width="13" height="5" fill="#e6f0fa" stroke="#9cc4ec" stroke-width="1"/></svg>
<div class="t" style="left:925px;top:784px;color:#333">Millimetri</div>

</body></html>
